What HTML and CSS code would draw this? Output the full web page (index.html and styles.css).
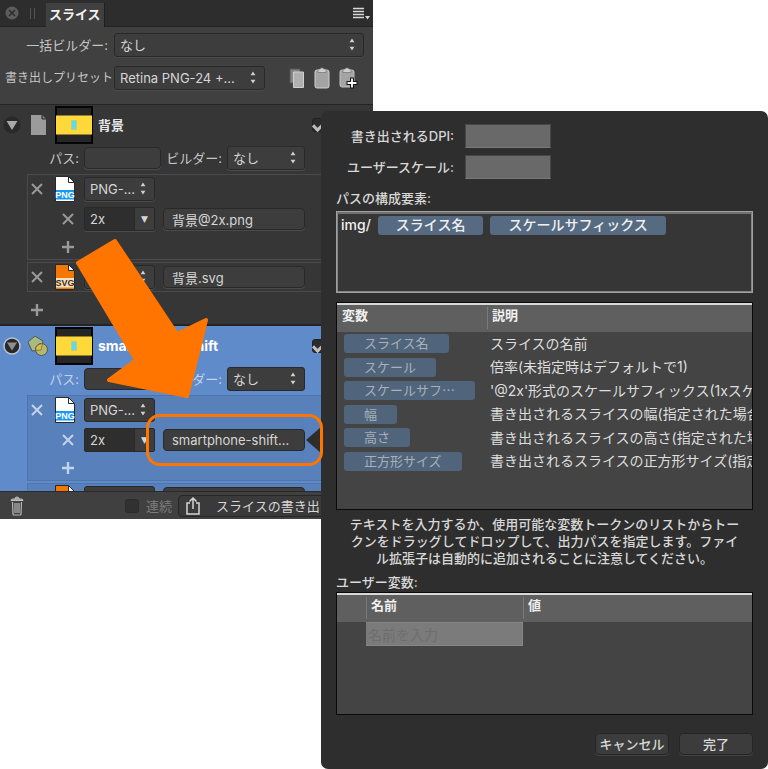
FILE: index.html
```html
<!DOCTYPE html>
<html lang="ja">
<head>
<meta charset="utf-8">
<meta name="viewport" content="width=device-width, initial-scale=1">
<title>スライス</title>
<link rel="stylesheet" href="styles.css">
</head>
<body>
<svg class="defs" width="0" height="0" aria-hidden="true">
  <symbol id="updown" viewBox="0 0 6 14"><path d="M3 0.5 5.6 4.5H.4zM3 13.5.4 9.5h5.2z" fill="#cfcfcf"/></symbol>
  <symbol id="cross" viewBox="0 0 12 12"><path d="M1 1l10 10M11 1 1 11" fill="none" stroke="currentColor" stroke-width="2"/></symbol>
  <symbol id="plus" viewBox="0 0 12 12"><path d="M6 0v12M0 6h12" fill="none" stroke="currentColor" stroke-width="2.400"/></symbol>
  <symbol id="thumb" viewBox="0 0 38 38">
    <rect x="1" y="1" width="36" height="36" fill="#262626" stroke="#050505" stroke-width="2"/>
    <rect x="1" y="9.5" width="36" height="19" fill="#ffd93a"/>
    <rect x="16" y="14" width="6" height="10" fill="#b9cf7c"/>
    <rect x="17" y="15" width="4" height="8" fill="#5fd9f2"/>
  </symbol>
  <symbol id="file" viewBox="0 0 20 26">
    <path d="M.5.5h13l6 6v19H.5z" fill="var(--paper)" stroke="#26292c"/>
    <path d="M13.500.5v6h6z" fill="#fff" stroke="#26292c"/>
    <rect x="1" y="14" width="18" height="9.500" fill="var(--band)"/>
  </symbol>
</svg>
<main class="scene">
  <section class="panel">
    <header class="tabs">
      <button class="plain close" aria-label="閉じる"><svg width="14" height="14" viewBox="0 0 14 14"><circle cx="7" cy="7" r="6.500" fill="#5d5d5d"/><path d="M4 4l6 6M10 4l-6 6" stroke="#2c2c2c" stroke-width="1.600"/></svg></button>
      <svg class="grip" width="5" height="11" viewBox="0 0 5 11"><path d="M.5 0v11M4.500 0v11" stroke="#555"/></svg>
      <h1 class="tab">スライス</h1>
      <button class="plain menu" aria-label="メニュー"><svg width="18" height="14" viewBox="0 0 18 14"><path d="M1 2.500h11M1 5.500h11M1 8.500h11M1 11.500h11" stroke="#d8d8d8" stroke-width="1.500"/><path d="M13 10h5l-2.500 3.500z" fill="#d8d8d8"/></svg></button>
    </header>

    <div class="toolbar">
      <label class="lbl" for="batch">一括ビルダー:</label>
      <div class="pick"><select id="batch"><option>なし</option></select><svg class="ud"><use href="#updown"/></svg></div>
      <label class="lbl clipped" for="preset">書き出しプリセット</label>
      <div class="preset">
        <div class="pick preset-pick"><select id="preset"><option>Retina PNG-24 +...</option></select><svg class="ud"><use href="#updown"/></svg></div>
        <button class="plain" aria-label="コピー"><svg width="18" height="24" viewBox="0 0 18 24"><path d="M2 3h10v14H2z" fill="#858585" stroke="#555"/><path d="M5.500 6h10v15.500h-10z" fill="#b0b0b0" stroke="#d0d0d0"/></svg></button>
        <button class="plain" aria-label="ペースト"><svg width="18" height="24" viewBox="0 0 18 24"><rect x="2" y="4" width="14" height="18" rx="2" fill="#a4a4a4" stroke="#d0d0d0"/><path d="M5 6.500V4q0-1 1-1h1q2-2.500 4 0h1q1 0 1 1v2.500z" fill="#cfcfcf" stroke="#666" stroke-width=".6"/></svg></button>
        <button class="plain" aria-label="追加ペースト"><svg width="20" height="24" viewBox="0 0 20 24"><rect x="2" y="4" width="14" height="17" rx="2" fill="#a4a4a4" stroke="#c0c0c0"/><path d="M5 6.500V4q0-1 1-1h1q2-2.500 4 0h1q1 0 1 1v2.500z" fill="#cfcfcf" stroke="#666" stroke-width=".6"/><path d="M14 11.500v11M8.500 17h11" stroke="#111" stroke-width="4"/><path d="M14 12.500v9M9.500 17h9" stroke="#fff" stroke-width="1.800"/></svg></button>
      </div>
    </div>

    <div class="list">
      <article class="slice">
        <div class="head">
          <button class="plain" aria-label="折りたたむ"><svg width="18" height="18" viewBox="0 0 18 18"><circle cx="9" cy="9" r="8.500" fill="#292929"/><path d="M3.500 5h11L9 14z" fill="#a8a8a8"/></svg></button>
          <svg class="kind" viewBox="0 0 20 20"><path d="M3 0h11l4 4v16H3z" fill="#9b9b9b"/><path d="M14 0v4h4" fill="#777" stroke="#2b2b2b"/></svg>
          <svg class="thumb"><use href="#thumb"/></svg>
          <h2>背景</h2>
          <input class="tick" type="checkbox" checked aria-label="背景を書き出す">
        </div>
        <div class="path">
          <label class="lbl" for="p1">パス:</label><input class="field" id="p1" type="text">
          <label class="lbl" for="b1">ビルダー:</label>
          <div class="pick"><select id="b1"><option>なし</option></select><svg class="ud"><use href="#updown"/></svg></div>
        </div>
        <div class="formats">
          <div class="format">
            <div class="line">
              <button class="plain x" aria-label="形式を削除"><svg><use href="#cross"/></svg></button>
              <span class="type png"><svg><use href="#file"/></svg><b>PNG</b></span>
              <div class="pick"><select aria-label="形式"><option>PNG-...</option></select><svg class="ud"><use href="#updown"/></svg></div>
            </div>
            <div class="line sub">
              <button class="plain x" aria-label="スケールを削除"><svg><use href="#cross"/></svg></button>
              <div class="pick combo"><select aria-label="スケール"><option>2x</option></select><span class="drop">▼</span></div>
              <input class="field name" type="text" aria-label="ファイル名" value="背景@2x.png">
            </div>
            <div class="add inner"><button class="plain x" aria-label="スケールを追加"><svg><use href="#plus"/></svg></button></div>
          </div>
          <div class="format">
            <div class="line">
              <button class="plain x" aria-label="形式を削除"><svg><use href="#cross"/></svg></button>
              <span class="type svg"><svg><use href="#file"/></svg><b>SVG</b></span>
              <div class="pick"><select aria-label="形式"><option></option></select><svg class="ud"><use href="#updown"/></svg></div>
              <input class="field name" type="text" aria-label="ファイル名" value="背景.svg">
            </div>
          </div>
        </div>
        <div class="add"><button class="plain x" aria-label="形式を追加"><svg><use href="#plus"/></svg></button></div>
      </article>

      <article class="slice selected">
        <div class="head">
          <button class="plain" aria-label="折りたたむ"><svg width="18" height="18" viewBox="0 0 18 18"><circle cx="9" cy="9" r="8" fill="#292929" stroke="#b9c3d1" stroke-width="1.500"/><path d="M4 5.500h10L9 13.500z" fill="#8e8e8e"/></svg></button>
          <svg class="kind" viewBox="0 0 20 20"><path d="M7 0l8 5-2 9-9 1-4-9z" fill="#a9b980" stroke="#4a5a50"/><circle cx="13.500" cy="13.500" r="6" fill="#b7b770" stroke="#4a5a50"/><path d="M14.500 7.500 13 14l-5 .5q-1.500-5.500 6.500-7z" fill="#e0bc4a" stroke="#6b6538" stroke-width=".7"/></svg>
          <svg class="thumb"><use href="#thumb"/></svg>
          <h2>smartphone-shift</h2>
          <input class="tick" type="checkbox" checked aria-label="smartphone-shiftを書き出す">
        </div>
        <div class="path">
          <label class="lbl" for="p2">パス:</label><input class="field" id="p2" type="text">
          <label class="lbl" for="b2">ビルダー:</label>
          <div class="pick"><select id="b2"><option>なし</option></select><svg class="ud"><use href="#updown"/></svg></div>
        </div>
        <div class="formats">
          <div class="format">
            <div class="line">
              <button class="plain x" aria-label="形式を削除"><svg><use href="#cross"/></svg></button>
              <span class="type png"><svg><use href="#file"/></svg><b>PNG</b></span>
              <div class="pick"><select aria-label="形式"><option>PNG-...</option></select><svg class="ud"><use href="#updown"/></svg></div>
            </div>
            <div class="line sub">
              <button class="plain x" aria-label="スケールを削除"><svg><use href="#cross"/></svg></button>
              <div class="pick combo"><select aria-label="スケール"><option>2x</option></select><span class="drop">▼</span></div>
              <input class="field name" type="text" aria-label="ファイル名" value="smartphone-shift...">
            </div>
            <div class="add inner"><button class="plain x" aria-label="スケールを追加"><svg><use href="#plus"/></svg></button></div>
          </div>
          <div class="format">
            <div class="line">
              <button class="plain x" aria-label="形式を削除"></button>
              <span class="type svg"><svg><use href="#file"/></svg></span>
              <div class="pick"><select aria-label="形式"></select></div>
              <input class="field name" type="text" aria-label="ファイル名">
            </div>
          </div>
        </div>
      </article>
    </div>

    <footer class="foot">
      <button class="plain" aria-label="削除"><svg width="14" height="20" viewBox="0 0 14 20"><path d="M1 4.500Q1 3 3 3h8q2 0 2 1.500zM5 3q0-2 2-2t2 2" fill="#8f8f8f" stroke="#c2c2c2"/><path d="M2.500 6l.5 12q0 1 1 1h6q1 0 1-1l.5-12M5 7v10M7 7v10M9 7v10" fill="none" stroke="#b8b8b8" stroke-width="1.200"/></svg></button>
      <label class="cont"><input type="checkbox">連続</label>
      <button class="export"><svg width="14" height="18" viewBox="0 0 14 18"><path d="M4 6H1v11h12V6h-3M7 12V1.500M3.500 4.500 7 1l3.500 3.500" fill="none" stroke="#d5d5d5" stroke-width="1.500"/></svg>スライスの書き出し</button>
    </footer>
  </section>

  <section class="popover">
    <svg class="caret" viewBox="0 0 15 26"><path d="M15 0v26L0 13z" fill="#2e2e2e"/></svg>
    <div class="dims">
      <label for="dpi">書き出されるDPI:</label><input id="dpi" type="text">
      <label for="scale">ユーザースケール:</label><input id="scale" type="text">
    </div>
    <h3>パスの構成要素:</h3>
    <div class="tokens"><span>img/</span><span class="token">スライス名</span><span class="token">スケールサフィックス</span></div>

    <div class="grid vars">
      <table>
        <thead><tr><th class="c-var">変数</th><th>説明</th></tr></thead>
        <tbody>
          <tr><td><span class="token">スライス名</span></td><td>スライスの名前</td></tr>
          <tr><td><span class="token">スケール</span></td><td>倍率(未指定時はデフォルトで1)</td></tr>
          <tr><td><span class="token">スケールサフ⋯</span></td><td>'@2x'形式のスケールサフィックス(1xスケ</td></tr>
          <tr><td><span class="token">幅</span></td><td>書き出されるスライスの幅(指定された場合</td></tr>
          <tr><td><span class="token">高さ</span></td><td>書き出されるスライスの高さ(指定された場</td></tr>
          <tr><td><span class="token">正方形サイズ</span></td><td>書き出されるスライスの正方形サイズ(指定</td></tr>
        </tbody>
      </table>
    </div>

    <p class="hint">テキストを入力するか、使用可能な変数トークンのリストからトークンをドラッグしてドロップして、出力パスを指定します。ファイル拡張子は自動的に追加されることに注意してください。</p>
    <h3>ユーザー変数:</h3>
    <div class="grid user">
      <table>
        <thead><tr><th class="c-no"></th><th class="c-name">名前</th><th>値</th></tr></thead>
        <tbody><tr><td></td><td class="entry"><input type="text" placeholder="名前を入力" aria-label="名前"></td><td></td></tr></tbody>
      </table>
    </div>
    <div class="actions"><button>キャンセル</button><button>完了</button></div>
  </section>

  <svg class="arrow" viewBox="0 0 138 164" aria-hidden="true"><path d="M42 5 5 27l58 97-27 20 78 16 19-76-29 14z"/></svg>
  <div class="ring"></div>
</main>
</body>
</html>
```
FILE: styles.css
```css
* { box-sizing: border-box; }
body {
  margin: 0;
  background: #fff;
  color: #c6c6c6;
  font: 13px/18px Inter, "Noto Sans CJK JP", sans-serif;
}
.defs { position: absolute; }
h1, h2, h3, p { margin: 0; font-size: 13px; }
button, input, select { font: inherit; color: inherit; margin: 0; }
svg { display: block; flex: none; }
.plain { background: none; border: 0; padding: 0; }

.scene {
  position: relative;
  display: grid;
  grid-template-columns: 321px 52px minmax(0, 1fr);
  align-items: start;
}
.panel { grid-area: 1 / 1 / 2 / 3; background: #404040; min-width: 0; }
.popover { grid-area: 1 / 2 / 2 / 4; }

/* Panel tabs */
.tabs {
  display: flex;
  align-items: center;
  height: 27px;
  padding: 0 3px 0 5px;
  background: #2d2d2d;
  border-bottom: 1px solid #232323;
}
.grip { margin: 0 11px; }
.tab {
  align-self: stretch;
  margin-top: 3px;
  height: 24px;
  padding: 0 3px;
  line-height: 22px;
  background: #404040;
  border-right: 1px solid #1f1f1f;
  color: #f2f2f2;
}
.menu { margin-left: auto; }

/* Selects and fields */
.pick { position: relative; height: 24px; min-width: 0; }
.pick select {
  display: block;
  width: 100%;
  height: 100%;
  padding: 0 18px 0 5px;
  appearance: none;
  background: #3d3d3d;
  border: 1px solid #292929;
  border-radius: 3px;
  box-shadow: 0 1px 0 #4b4b4b;
  color: #d6d6d6;
}
.ud { position: absolute; right: 9px; top: 5px; width: 6px; height: 13px; pointer-events: none; }
.field {
  height: 22px;
  min-width: 0;
  padding: 0 8px;
  background: #3d3d3d;
  border: 1px solid #292929;
  border-radius: 4px;
  box-shadow: 0 1px 0 #4b4b4b;
  color: #d6d6d6;
}
.lbl { text-align: right; white-space: nowrap; }

.toolbar {
  display: grid;
  grid-template-columns: 108px minmax(0, 1fr);
  gap: 9px 1px;
  align-items: center;
  height: 78px;
  padding: 6px 9px 14px 5px;
  border-bottom: 1px solid #242424;
}
.toolbar .lbl { padding-right: 5px; }
.toolbar .clipped { overflow: hidden; text-align: left; padding: 0; font-size: 12px; }
.preset { display: flex; align-items: center; gap: 7px; }
.preset-pick { width: 151px; margin-right: 16px; }

/* Slice list */
.list { height: 386px; overflow: hidden; }
.slice { height: 221px; background: #363636; border-bottom: 2px solid #242424; padding-top: 1px; }
.head { display: flex; align-items: center; height: 38px; padding-left: 3px; }
.head h2 { color: #e8e8e8; margin-left: 5px; width: 214px; }
.kind { width: 20px; height: 20px; margin: 0 7px; }
.thumb { width: 38px; height: 38px; }
.tick {
  appearance: none;
  display: grid;
  place-items: center;
  width: 14px;
  height: 14px;
  background: #2b2b2b;
  border: 1px solid #202020;
  border-radius: 3px;
}
.tick::before {
  content: "";
  width: 9px;
  height: 5px;
  border: solid #bdbdbd;
  border-width: 0 0 3px 3px;
  transform: rotate(-45deg);
}
.path {
  display: grid;
  grid-template-columns: 79px 77px 56px 78px;
  column-gap: 5px;
  align-items: center;
  height: 24px;
  margin-top: 2px;
}
.formats { display: grid; gap: 2px; margin: 4px 0 0 27px; }
.format { border: 1px solid #4a4a4a; padding: 1px 0; }
.line { display: flex; align-items: center; height: 26px; }
.x { width: 18px; height: 18px; display: grid; place-items: center; color: #999; }
.x svg { width: 12px; height: 12px; }
.line .pick { width: 71px; }
.line .name { width: 142px; margin-left: 8px; }
.type { position: relative; width: 20px; height: 26px; margin: 0 9px; }
.type svg { width: 20px; height: 26px; }
.type b { position: absolute; left: 0; right: 0; top: 14px; text-align: center; font: bold 9px/10px "Liberation Sans", sans-serif; }
.png { --paper: #fff; --band: #1b97ee; color: #fff; }
.svg { --paper: #f57600; --band: #f1e3c4; color: #4a2a10; }
.sub { height: 30px; margin: 2px 0 0 31px; }
.sub .combo { margin-left: 7px; }
.combo select { background: #2e2e2e; border-radius: 2px; }
.drop {
  position: absolute;
  right: 1px;
  top: 1px;
  width: 20px;
  height: 22px;
  background: #3d3d3d;
  border-left: 1px solid #292929;
  font: 9px/22px "DejaVu Sans", sans-serif;
  text-align: center;
  color: #d6d6d6;
  pointer-events: none;
}
.add { height: 38px; padding: 9px 0 0 28px; }
.add.inner { height: 24px; padding: 4px 0 0 31px; }

.selected { background: #5f8bca; }
.selected .head h2 { color: #fff; font-size: 14px; }
.selected .lbl, .selected .x { color: #c3d3eb; }
.selected .format { background: #5880bb; border-color: #4f75ad; }
.selected .pick select, .selected .field { box-shadow: none; }

.foot {
  display: flex;
  align-items: center;
  height: 28px;
  padding: 0 8px 0 10px;
  background: #404040;
  border-top: 1px solid #2a2a2a;
}
.cont { display: flex; align-items: center; gap: 7px; margin: 0 6px 0 101px; color: #7d7d7d; }
.cont input { appearance: none; width: 14px; height: 14px; background: #313131; border: 1px solid #2b2b2b; border-radius: 3px; }
.export {
  display: flex;
  align-items: center;
  gap: 16px;
  flex: 1;
  height: 22px;
  padding: 0 7px;
  white-space: nowrap;
  overflow: hidden;
  background: #3a3a3a;
  border: 1px solid #262626;
  border-radius: 4px;
  color: #d6d6d6;
}

/* Path editor popover */
.popover {
  position: relative;
  margin-top: 111px;
  padding: 13px 15px 14px;
  background: #2e2e2e;
  border-radius: 7px;
  color: #d8d8d8;
}
.caret { position: absolute; left: -15px; top: 316px; width: 15px; height: 26px; }
.dims {
  display: grid;
  grid-template-columns: 118px 86px;
  gap: 7px 11px;
  align-items: center;
  text-align: right;
  font-weight: 500;
  white-space: nowrap;
}
.dims input { height: 24px; width: 100%; background: #696969; border: 1px solid #474747; border-bottom-color: #777; }
h3 { font-weight: 500; line-height: 18px; }
.dims + h3 { margin-top: 10px; }
.tokens {
  display: flex;
  gap: 7px;
  align-items: flex-start;
  height: 82px;
  margin-top: 4px;
  padding: 2px 3px;
  background: #363636;
  border: 2px solid #858585;
  border-top: 3px solid #717171;
  outline: 1px solid #a0a0a0;
  outline-offset: -1px;
  color: #f0f0f0;
  font-size: 14px;
  font-weight: 500;
}
.token {
  display: inline-block;
  height: 19px;
  padding: 0 20px;
  line-height: 18px;
  background: #566b82;
  border-radius: 3px;
  white-space: nowrap;
}
.tokens .token { padding: 0 18px; }

.grid { background: #444; border: 1px solid #0a0a0a; overflow: hidden; }
.grid table { width: 100%; table-layout: fixed; border-collapse: collapse; border-top: 2px solid #d8d8d8; }
.grid th {
  height: 28px;
  padding: 0 5px 8px;
  background: #5f5f5f;
  text-align: left;
  line-height: 18px;
  color: #f0f0f0;
}
.grid th + th { background: linear-gradient(#7a7a7a, #7a7a7a) 0 2px / 1px 22px no-repeat #5f5f5f; }
.vars { height: 208px; margin-top: 9px; }
.c-var { width: 150px; }
.vars td { height: 23px; padding: 0 0 0 3px; line-height: 20px; font-size: 14px; white-space: nowrap; }
.vars tr:nth-child(even) td { height: 24px; }
.vars td:first-child { padding-left: 7px; }
.vars td .token {
  display: block;
  width: fit-content;
  font: 13px/18px "Noto Sans CJK JP", sans-serif;
  background: #50657b;
  color: #a9b0b8;
}
.vars td + td { color: #dedede; }
.hint { padding: 0 12px; margin-top: 6px; line-height: 17px; text-align: center; font-weight: 500; }
.hint + h3 { margin-top: 6px; }
.user { height: 123px; margin-top: 1px; }
.c-no { width: 29px; }
.c-name { width: 157px; }
.user td { padding: 0; height: 24px; }
.entry input { display: block; width: 100%; height: 24px; padding: 0 2px; background: #7b7b7b; border: 1px solid #868686; border-left: 0; font-size: 14px; }
.entry input::placeholder { color: #6e6e6e; opacity: 1; }
.actions { display: flex; justify-content: flex-end; gap: 10px; margin-top: 18px; }
.actions button {
  width: 74px;
  height: 22px;
  padding: 0;
  background: #3c3c3c;
  border: 1px solid #252525;
  border-radius: 4px;
  box-shadow: 0 1px 0 #444;
  font-weight: 500;
  white-space: nowrap;
}

/* Callout drawn over the interface */
.arrow { position: absolute; left: 73px; top: 236px; width: 138px; height: 164px; }
.arrow path { fill: #ff7500; stroke: #ff7500; stroke-width: 4; stroke-linejoin: round; }
.ring { position: absolute; left: 146px; top: 414px; width: 177px; height: 52px; border: 3px solid #ff7500; border-radius: 14px; }
```
